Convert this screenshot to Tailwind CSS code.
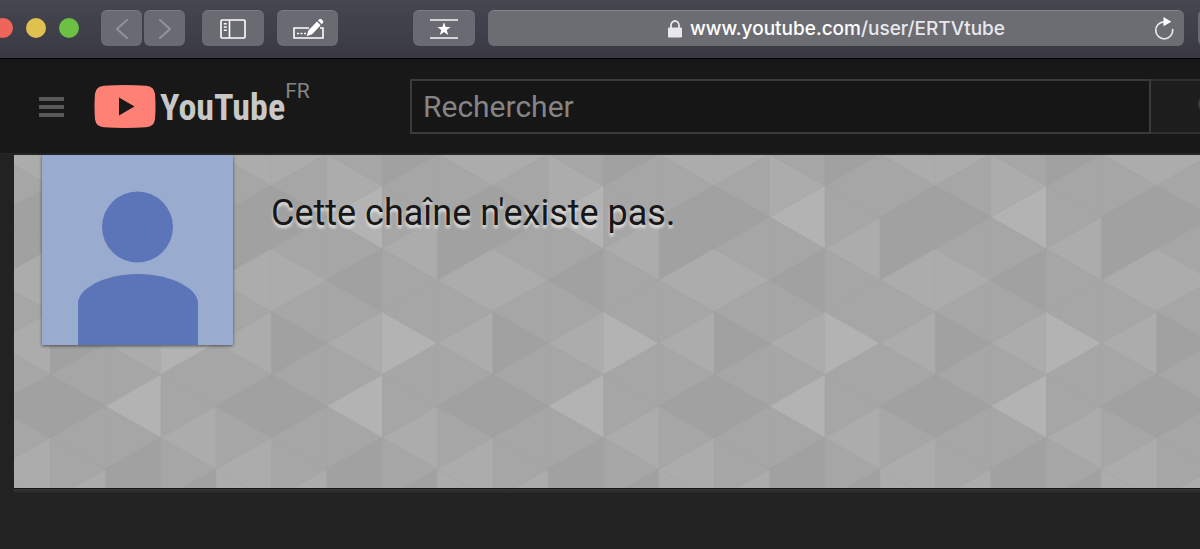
<!doctype html>
<html lang="fr">
  <head>
    <meta charset="utf-8" />
    <meta name="viewport" content="width=device-width, initial-scale=1" />
    <title>YouTube</title>
    <script src="https://cdn.jsdelivr.net/npm/@tailwindcss/browser@4"></script>
  </head>
  <body
    class="min-h-screen overflow-x-hidden bg-[#222222] font-[Roboto,sans-serif]"
  >
    <!-- browser toolbar -->
    <div
      class="flex items-center overflow-hidden border-b border-black bg-linear-to-b from-[#444750] to-[#3a3943] pt-[10px] pb-3"
    >
      <div class="-ml-[7px] flex shrink-0 gap-[13px]">
        <span class="size-5 rounded-full bg-[#f0655a]"></span>
        <span class="size-5 rounded-full bg-[#e0c04e]"></span>
        <span class="size-5 rounded-full bg-[#6cc044]"></span>
      </div>

      <div class="ml-[22px] flex shrink-0 gap-[2px]">
        <button
          aria-label="Précédent"
          class="flex h-9 w-[41px] items-center justify-center rounded-md border-t border-[#7a7b82] bg-[#696a72]"
        >
          <svg class="h-5 w-3" viewBox="0 0 12 20" fill="none" stroke="#92939a" stroke-width="2" stroke-linecap="round">
            <path d="M11 1 1 10l10 9" />
          </svg>
        </button>
        <button
          aria-label="Suivant"
          class="flex h-9 w-[41px] items-center justify-center rounded-md border-t border-[#7a7b82] bg-[#696a72]"
        >
          <svg class="h-5 w-3" viewBox="0 0 12 20" fill="none" stroke="#92939a" stroke-width="2" stroke-linecap="round">
            <path d="m1 1 10 9-10 9" />
          </svg>
        </button>
      </div>

      <button
        aria-label="Barre latérale"
        class="ml-[17px] flex h-9 w-[62px] shrink-0 items-center justify-center rounded-md border-t border-[#7a7b82] bg-[#696a72]"
      >
        <svg class="h-5 w-[26px]" viewBox="0 0 26 20" fill="none" stroke="#fff" stroke-width="1.6">
          <rect x="1" y="1" width="24" height="18" rx="1" />
          <path d="M9.500 1v18M3.800 4.800h3M3.800 8h3M3.800 11.200h3" />
        </svg>
      </button>
      <button
        aria-label="Remplissage automatique"
        class="ml-[13px] flex h-9 w-[61px] shrink-0 items-center justify-center rounded-md border-t border-[#7a7b82] bg-[#696a72]"
      >
        <svg class="h-[22px] w-8" viewBox="0 0 32 22" fill="none" stroke="#fff" stroke-width="1.600">
          <path d="M17 10H2v10h29V10h-3" />
          <path d="M5 15.500h2M8.500 15.500h2M12 15.500h2" />
          <path fill="#fff" stroke="none" d="m14.500 18.300 2-6L25 3.600l3.700 3.600-8.600 9zM26 2.600l1.200-1.300q1.200-1 2.300 0l1.400 1.400q1 1.100 0 2.200l-1.200 1.300z" />
        </svg>
      </button>
      <button
        aria-label="Sites favoris"
        class="ml-[75px] flex h-9 w-[62px] shrink-0 items-center justify-center rounded-md border-t border-[#7a7b82] bg-[#696a72]"
      >
        <svg class="h-[22px] w-7" viewBox="0 0 28 22">
          <path fill="none" stroke="#d3d4d8" stroke-width="1.800" d="M0 2h28M0 20h28" />
          <path fill="#fff" d="m14 4.300 1.700 4.700h5l-4 3.100 1.500 4.900-4.200-2.900L9.800 17l1.500-4.900-4-3.100h5z" />
        </svg>
      </button>

      <div
        class="ml-[13px] flex h-9 flex-1 items-center rounded-md border-t border-[#85868c] bg-[#6c6d73] pr-[9px]"
      >
        <div class="flex flex-1 items-center justify-center gap-2 pl-8">
          <svg class="h-[18px] w-[14px]" viewBox="0 0 14 18">
            <path fill="none" stroke="#e8e8ec" stroke-width="1.800" d="M3 9V5.500a4 4.500 0 0 1 8 0V9" />
            <rect y="7.500" width="14" height="10" rx="1" fill="#e8e8ec" />
          </svg>
          <a
            href="#"
            class="font-[Inter,sans-serif] text-[19px] leading-6 font-medium text-[#e8e8ec]"
            ><span class="text-white">www.youtube.com</span>/user/ERTVtube</a
          >
        </div>
        <button aria-label="Actualiser">
          <svg class="h-6 w-[22px]" viewBox="0 0 22 24">
            <path fill="none" stroke="#e8e8ec" stroke-width="1.700" stroke-linecap="round" d="M11 4.800a8.500 8.500 0 1 0 8.700 7.700" />
            <path fill="#fff" d="m10.500 0 7.800 4.800-7.800 4.500z" />
          </svg>
        </button>
      </div>
      <button
        aria-label="Partager"
        class="-mr-[60px] ml-[14px] h-9 w-[62px] shrink-0 rounded-md border-t border-[#7a7b82] bg-[#696a72]"
      ></button>
    </div>

    <!-- masthead -->
    <header
      class="flex items-center border-b-2 border-[#232323] bg-[#181818] pt-5 pb-[19px] pl-[39px]"
    >
      <button aria-label="Menu" class="flex w-[25px] shrink-0 flex-col gap-1">
        <span class="h-1 bg-[#585858]"></span>
        <span class="h-1 bg-[#585858]"></span>
        <span class="h-1 bg-[#585858]"></span>
      </button>
      <a href="#" class="ml-[30px] flex w-[316px] shrink-0 items-center">
        <svg class="h-[43px] w-[62px]" viewBox="0 0 62 43">
          <path fill="#ff8074" d="M10 .8Q31-.6 52 .8q8 .5 9 8 1 12.700 0 25.400-1 7.500-9 8-21 1.400-42 0-8-.5-9-8Q0 21.500 1 8.800q1-7.500 9-8z" />
          <path fill="#181818" d="m25 12.500 15.500 9-15.500 9z" />
        </svg>
        <span
          class="ml-1 pt-1 font-['Liberation_Sans_Narrow','Roboto_Condensed',sans-serif] text-[36px] leading-[39px] font-bold text-[#c8c8c8]"
          >YouTube</span
        >
        <span class="self-start text-[21px] leading-3 text-[#858585]">FR</span>
      </a>
      <form class="flex flex-1">
        <input
          type="text"
          aria-label="Rechercher"
          placeholder="Rechercher"
          class="h-[55px] min-w-0 flex-1 border-2 border-[#3b3b3b] bg-[#161616] px-[11px] text-[30px] text-white placeholder:text-[#858585]"
        />
        <button
          type="button"
          aria-label="Lancer la recherche"
          class="h-[55px] w-[49px] overflow-hidden border-y-2 border-[#303030] bg-[#1d1d1d] pl-[47px]"
        >
          <svg class="h-6 w-6" viewBox="0 0 24 24" fill="none" stroke="#3b3b3b" stroke-width="2">
            <circle cx="9" cy="9" r="8" />
            <path d="m15 15 8 8" />
          </svg>
        </button>
      </form>
    </header>

    <main class="pl-[14px]">
      <section
        class="relative flex min-h-[333px] items-start overflow-hidden bg-[#a5a5a5] pl-7"
      >
        <!-- triangle backdrop, one tile is four columns wide -->
        <svg class="absolute inset-0 h-full w-full" aria-hidden="true">
          <defs>
            <pattern id="facets" patternUnits="userSpaceOnUse" x="-224" width="664" height="1000" patternTransform="scale(.33333)">
              <rect width="664" height="1000" fill="#a6a6a6" />
              <path
                fill="#a1a1a1"
                d="M0-97v189L166-3zM166 942v189L0 1037zM332 92v189L166 186zM166 186v189l166-94zM332 659v189l-166-95zM332 92v189l166-95zM332 470v189l166-95zM332 659v189l166-95zM664 281v189l-166-95zM664 848v189l-166-95zM498 942v189l166-94z"
              />
              <path
                fill="#acacac"
                d="M166 186v189L0 281zM166 753v189L0 848zM332-97V92L166-3zM332 281v189l-166-95zM332 470v189l-166-95zM332 848v189l-166-95zM166 942v189l166-94zM332-97V92L498-3zM332 281v189l166-95zM498 942v189l-166-94zM498-3v189l166-94zM664 470v189l-166-95z"
              />
              <path
                fill="#b3b3b3"
                d="M0 470v189l166-95zM664 92v189l-166-95zM664 659v189l-166-95z"
              />
              <path
                fill="none"
                stroke="#949494"
                stroke-opacity=".25"
                stroke-width="3"
                d="M0 92 166-3l498 284M0 92l664 378M0 281l664 378M0 470l664 378M0 659l664 378M0 848l332 189M0 281 498-3l166 95M0 470 664 92M0 659l664-378M0 848l664-378M0 1037l664-378M332 1037l332-189"
              />
              <path
                stroke="#949494"
                stroke-opacity=".12"
                stroke-width="3"
                d="M1 0v1000M166 0v1000M332 0v1000M498 0v1000"
              />
            </pattern>
          </defs>
          <rect width="100%" height="100%" fill="url(#facets)" />
        </svg>

        <svg
          class="relative h-[190px] w-[191px] shrink-0 bg-[#9aabd0] shadow-[0_1px_3px_#0000008c]"
          viewBox="0 0 191 190"
          role="img"
          aria-label="Avatar"
        >
          <circle cx="95.500" cy="72" r="35.500" fill="#5c75b8" />
          <path fill="#5c75b8" d="M36 190v-42c0-14 26-29 60-29s60 15 60 29v42z" />
        </svg>
        <h1
          class="relative pt-9 pl-[38px] text-[36px] leading-[44px] text-[#171717] [text-shadow:0_3px_3px_#ffffffb3]"
        >
          Cette chaîne n'existe pas.
        </h1>
      </section>
      <div
        class="h-[6px] border-t border-[#171717] bg-linear-to-b from-[#373737] to-[#222222]"
      ></div>
    </main>
  </body>
</html>
